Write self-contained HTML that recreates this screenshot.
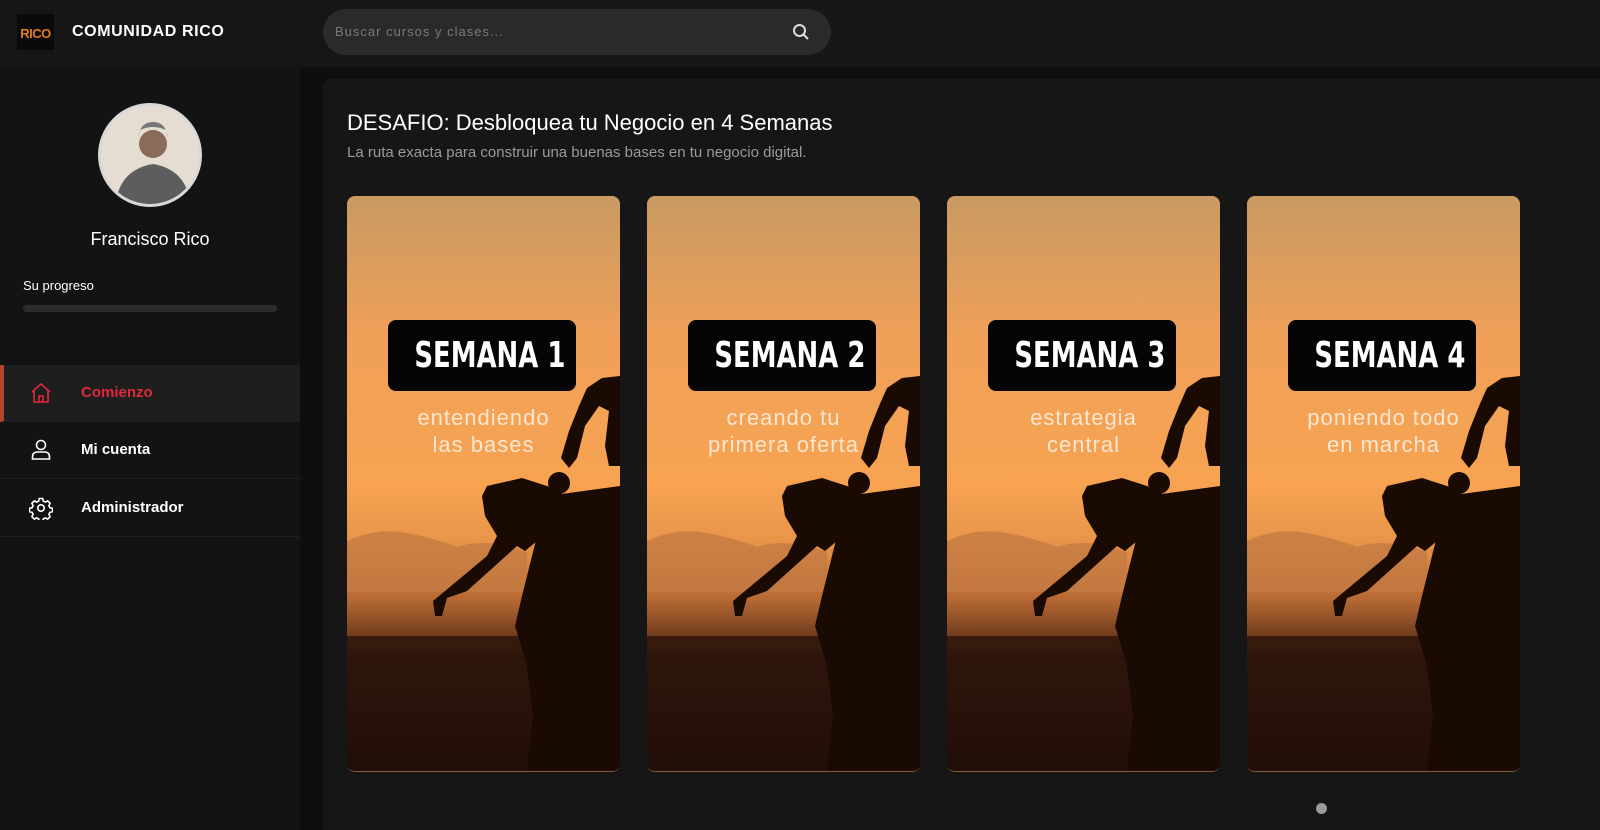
<!DOCTYPE html>
<html><head><meta charset="utf-8"><style>
*{margin:0;padding:0;box-sizing:border-box}
body{width:1600px;height:830px;background:#0e0e0e;font-family:"Liberation Sans",sans-serif;overflow:hidden;position:relative;color:#fff}
.hdr{position:absolute;left:0;top:0;width:1600px;height:67px;background:#161616}
.logo{position:absolute;left:17px;top:14px;width:37px;height:36px;background:#0a0a0a;color:#e07b20;font-weight:bold;font-size:13px;text-align:center;line-height:40px;letter-spacing:-0.5px}
.brand{position:absolute;left:72px;top:23px;font-weight:bold;font-size:16px;letter-spacing:0.6px}
.search{position:absolute;left:323px;top:9px;width:508px;height:46px;border-radius:23px;background:#2a2a2a}
.search span{position:absolute;left:12px;top:15px;font-size:13px;color:#7a7a7a;letter-spacing:1px}
.side{position:absolute;left:0;top:67px;width:300px;height:763px;background:#131313}
.av{position:absolute;left:98px;top:103px;width:104px;height:104px;border-radius:50%;background:#e3e0dc;border:3px solid #d8d8d8;overflow:hidden}
.name{position:absolute;left:0;width:300px;text-align:center;top:229px;font-size:18px}
.prog{position:absolute;left:23px;top:278px;font-size:13px}
.bar{position:absolute;left:23px;top:305px;width:254px;height:7px;border-radius:4px;background:#2c2c2c}
.mi{position:absolute;left:0;width:300px;height:57px;border-bottom:1px solid #1f1f1f;font-size:15px;font-weight:bold}
.mi span{position:absolute;left:81px;top:19px}
.mi svg{position:absolute;left:29px;top:16px}
.main{position:absolute;left:323px;top:79px;width:1277px;height:751px;background:#161616;border-radius:8px 0 0 0}
h1{position:absolute;left:347px;top:110px;font-size:22px;font-weight:normal}
.sub{position:absolute;left:347px;top:144px;font-size:15px;color:#9a9a9a}
.card{position:absolute;top:196px;width:273px;height:576px;border-radius:8px;overflow:hidden;background:linear-gradient(180deg,#c99a62 0%,#f0a058 25%,#f7a352 50%,#e8954a 60%,#b86a35 70%,#4a2410 80%,#1c0c06 100%);border-bottom:1px solid #8a5a30}
.card .tag{position:absolute;left:41px;top:124px;width:188px;height:71px;background:#050505;border-radius:8px;overflow:hidden}
.card .tag b{display:block;width:188px;text-align:center;white-space:nowrap;color:#fff;font-family:"DejaVu Sans",sans-serif;font-weight:bold;font-size:36px;line-height:71px;transform:scaleX(0.72)}
.card .t{position:absolute;left:0;width:273px;top:208px;text-align:center;color:#fbe6d0;font-size:22px;line-height:27px;letter-spacing:1px;white-space:nowrap}
.card svg{position:absolute;left:0;top:0}
.dot{position:absolute;left:1316px;top:803px;width:11px;height:11px;border-radius:50%;background:#9a9a9a}
</style></head><body>
<div class="hdr"><div class="logo">RICO</div><div class="brand">COMUNIDAD RICO</div>
<div class="search"><span>Buscar cursos y clases...</span>
<svg style="position:absolute;left:469px;top:14px" width="18" height="18" viewBox="0 0 18 18" fill="none" stroke="#ddd" stroke-width="2"><circle cx="7.5" cy="7.5" r="5.5"/><path d="M11.5 11.5l4.5 4.5"/></svg></div></div>
<div class="side"></div>
<div class="av"><svg width="104" height="104" viewBox="0 0 104 104"><rect width="104" height="104" fill="#e6ddd2"/><circle cx="52" cy="38" r="14" fill="#8a6a58"/><path d="M37 32q2-16 15-16t15 16l-2-8q-13-6-26 0z" fill="#777"/><path d="M14 104q2-40 38-46q36 6 38 46z" fill="#5d5d5f"/></svg></div>
<div class="name">Francisco Rico</div>
<div class="prog">Su progreso</div>
<div class="bar"></div>
<div class="mi" style="top:365px;background:#1e1e1e;border-left:4px solid #b5452a;color:#e0283c"><svg style="left:25px" width="24" height="24" viewBox="0 0 24 24" fill="none" stroke="#e0283c" stroke-width="1.6"><path d="M3 11L12 3l9 8M5 9v12h14V9M10 21v-6h4v6"/></svg><span style="left:77px">Comienzo</span></div>
<div class="mi" style="top:422px"><svg width="24" height="24" viewBox="0 0 24 24" fill="none" stroke="#fff" stroke-width="1.6"><circle cx="12" cy="7" r="4.5"/><path d="M3.5 21v-2q0-5 5-5h7q5 0 5 5v2z"/></svg><span>Mi cuenta</span></div>
<div class="mi" style="top:480px"><svg width="24" height="24" viewBox="0 0 24 24" fill="none" stroke="#fff" stroke-width="1.6"><circle cx="12" cy="12" r="3.2"/><path d="M10.3 2.5h3.4l.6 2.6 2 1 2.4-1.2 2.4 2.4-1.2 2.4 1 2 2.6.6v3.4l-2.6.6-1 2 1.2 2.4-2.4 2.4-2.4-1.2-2 1-.6 2.6h-3.4l-.6-2.6-2-1-2.4 1.2-2.4-2.4 1.2-2.4-1-2-2.6-.6v-3.4l2.6-.6 1-2-1.2-2.4 2.4-2.4 2.4 1.2 2-1z"/></svg><span>Administrador</span></div>
<div class="main"></div>
<h1>DESAFIO: Desbloquea tu Negocio en 4 Semanas</h1>
<div class="sub">La ruta exacta para construir una buenas bases en tu negocio digital.</div>

<svg width="0" height="0" style="position:absolute"><defs><g id="sc">
<path d="M0 345q30-14 60-8t50 14q30-10 70 5v40H0z" fill="#c47a42" opacity=".8"/>
<path d="M0 440h273v136H0z" fill="#23100a" opacity=".7"/>
<path d="M273 180L255 182L240 192L232 210L222 235L214 262L222 272L230 262L238 230L252 210L262 215L258 250L262 270L273 270z" fill="#1a0a04"/>
<path d="M273 290L200 300L190 340L175 400L168 430L180 470L186 520L180 576L273 576z" fill="#1a0a04"/>
<circle cx="212" cy="287" r="11" fill="#1a0a04"/>
<path d="M140 290L175 282L200 290L215 298L255 300L258 308L215 310L200 318L190 345L178 355L170 350L150 368L120 395L100 402L95 420L88 420L86 405L110 385L140 360L150 340L138 320L135 300z" fill="#1a0a04"/>
</g></defs></svg>

<div class="card" style="left:347px"><svg width="273" height="576"><use href="#sc"/></svg><div class="tag"><b>SEMANA 1</b></div><div class="t">entendiendo<br>las bases</div></div>
<div class="card" style="left:647px"><svg width="273" height="576"><use href="#sc"/></svg><div class="tag"><b>SEMANA 2</b></div><div class="t">creando tu<br>primera oferta</div></div>
<div class="card" style="left:947px"><svg width="273" height="576"><use href="#sc"/></svg><div class="tag"><b>SEMANA 3</b></div><div class="t">estrategia<br>central</div></div>
<div class="card" style="left:1247px"><svg width="273" height="576"><use href="#sc"/></svg><div class="tag"><b>SEMANA 4</b></div><div class="t">poniendo todo<br>en marcha</div></div>
<div class="dot"></div>
</body></html>
